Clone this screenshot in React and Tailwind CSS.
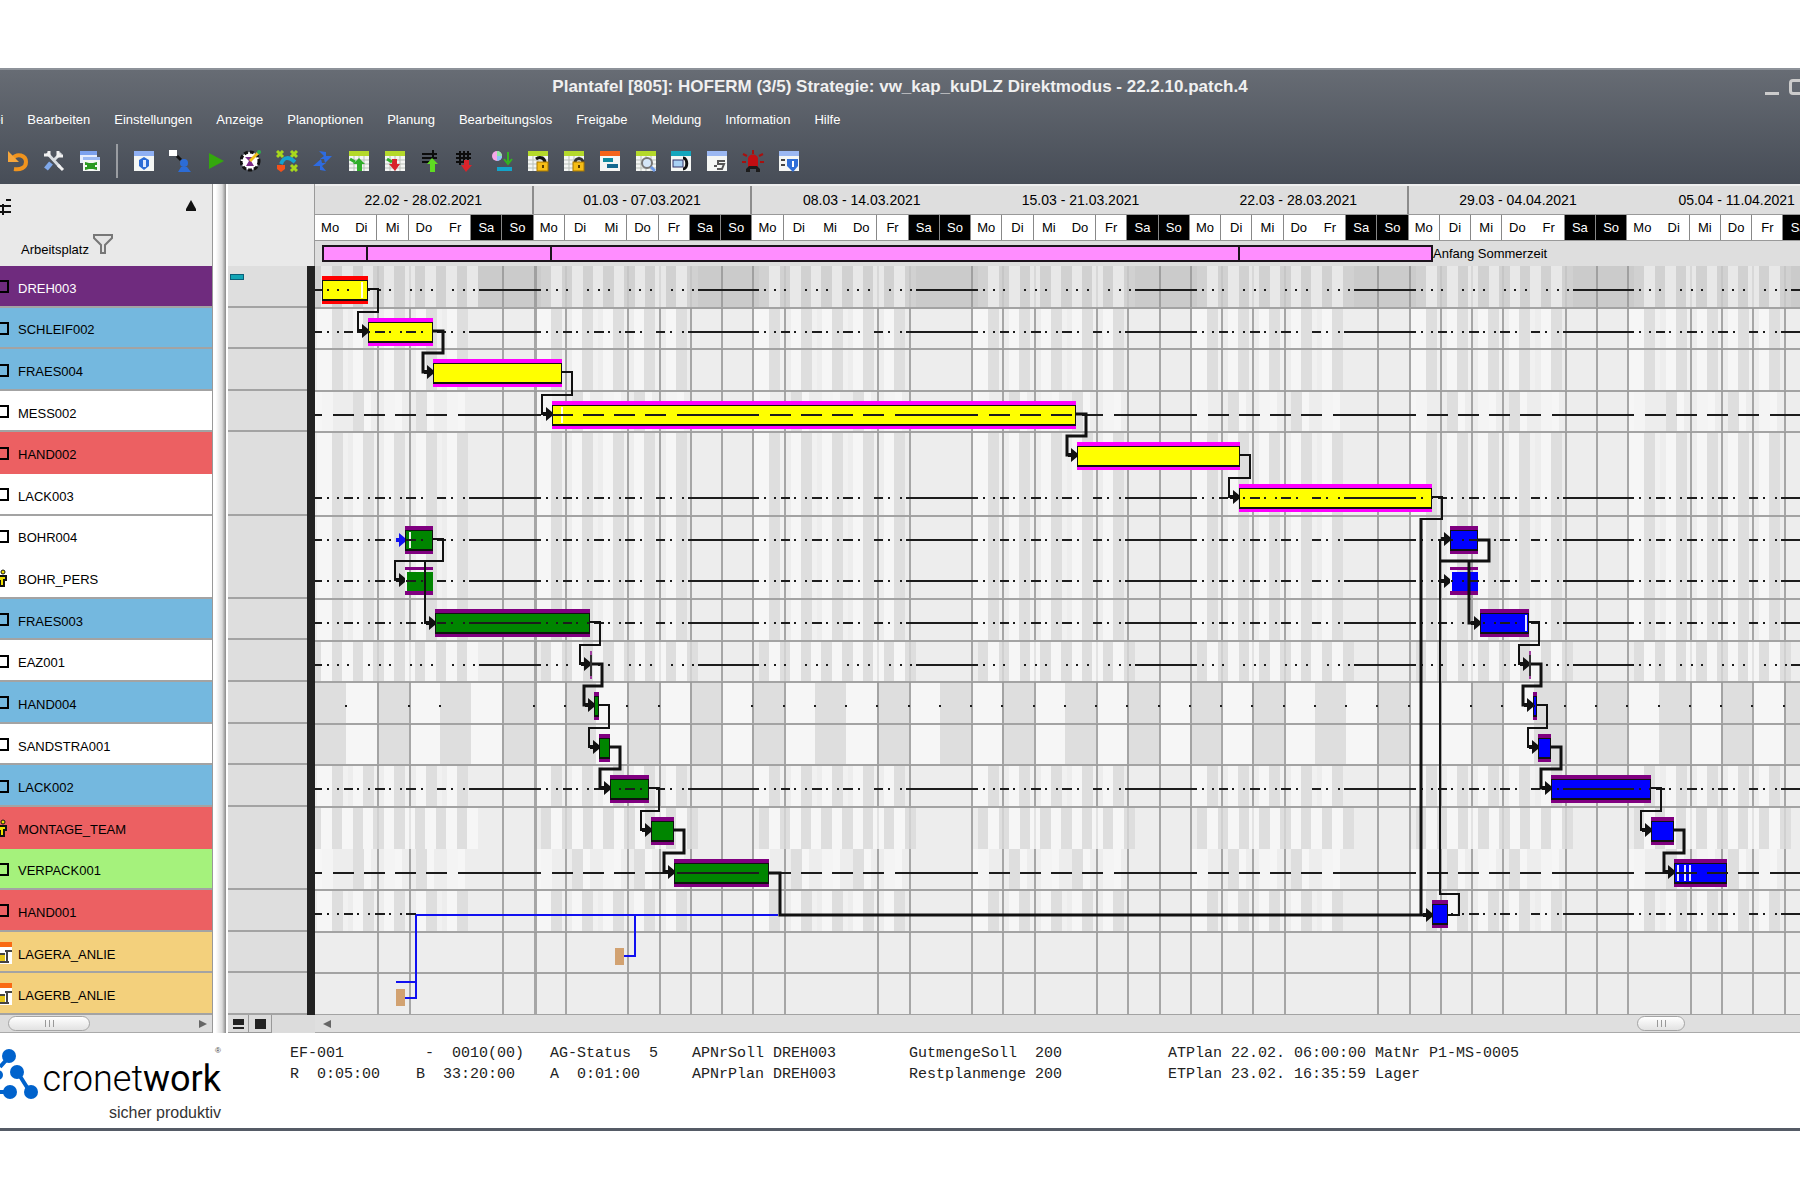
import React from 'react';

const DAY_WIDTH = 1531 / 49;
const ROW_HEIGHT = 749 / 18;

const MENU = [
  'Datei', 'Bearbeiten', 'Einstellungen', 'Anzeige', 'Planoptionen', 'Planung',
  'Bearbeitungslos', 'Freigabe', 'Meldung', 'Information', 'Hilfe',
];

// merged: days that have no divider to the day that follows
const WEEKS = [
  { label: '22.02 - 28.02.2021', line: true, merged: [0, 3] },
  { label: '01.03 - 07.03.2021', line: true, merged: [1] },
  { label: '08.03 - 14.03.2021', line: false, merged: [1, 2] },
  { label: '15.03 - 21.03.2021', line: false, merged: [2] },
  { label: '22.03 - 28.03.2021', line: true, merged: [3] },
  { label: '29.03 - 04.04.2021', line: false, merged: [3] },
  { label: '05.04 - 11.04.2021', line: false, merged: [0] },
];

const DAYS = ['Mo', 'Di', 'Mi', 'Do', 'Fr', 'Sa', 'So'];

// shift: which shift model is painted behind the row, dash: which capacity line
const ROWS = [
  { name: 'DREH003', color: 'bg-[#6f2b7e] text-white', line: true, shift: 'dark', dash: 'dots' },
  { name: 'SCHLEIF002', color: 'bg-[#74b8df]', line: true, shift: 'three', dash: 'mixed' },
  { name: 'FRAES004', color: 'bg-[#74b8df]', line: true, shift: 'three' },
  { name: 'MESS002', color: 'bg-white', line: true, shift: 'day', dash: 'long' },
  { name: 'HAND002', color: 'bg-[#ec6062]', line: false, shift: 'three' },
  { name: 'LACK003', color: 'bg-white', line: true, shift: 'three', dash: 'mixed' },
  { name: 'BOHR004', color: 'bg-white', line: false, shift: 'three', dash: 'mixed' },
  { name: 'BOHR_PERS', color: 'bg-white', line: true, shift: 'three', dash: 'mixed', icon: 'person' },
  { name: 'FRAES003', color: 'bg-[#74b8df]', line: true, shift: 'three', dash: 'mixed' },
  { name: 'EAZ001', color: 'bg-white', line: true, shift: 'two', dash: 'dots' },
  { name: 'HAND004', color: 'bg-[#74b8df]', line: true, shift: 'block', dash: 'daily' },
  { name: 'SANDSTRA001', color: 'bg-white', line: true, shift: 'block' },
  { name: 'LACK002', color: 'bg-[#74b8df]', line: true, shift: 'three', dash: 'mixed' },
  { name: 'MONTAGE_TEAM', color: 'bg-[#ec6062]', line: false, shift: 'two', icon: 'person' },
  { name: 'VERPACK001', color: 'bg-[#a5f27c]', line: true, shift: 'day', dash: 'long' },
  { name: 'HAND001', color: 'bg-[#ec6062]', line: true, shift: 'three', dash: 'mixed', gap: [100, 1133] },
  { name: 'LAGERA_ANLIE', color: 'bg-[#f3d07c]', line: true, icon: 'store' },
  { name: 'LAGERB_ANLIE', color: 'bg-[#f3d07c]', line: true, icon: 'store' },
];

// offsets in pixels from the Monday of each week: [from, to] is a stroke, a single number a dot
const DASHES = {
  mixed: [[0, 7], 13, 23, [29, 38], 43, 54, [60, 70], 75, 86, [91, 101], 107, [122, 131], 137, 149, [154, 219]],
  dots: [[0, 7], 13, 23, 33, 54, 65, 75, 96, 106, 117, 138, 149, 159, [164, 219]],
  long: [[0, 7], [18, 39], [49, 70], [80, 101], [111, 132], [143, 219]],
};

const BARS = [
  { row: 0, x1: 7, x2: 53, fill: '#ffff00', band: '#ff0000', ticks: [46] },
  { row: 1, x1: 53, x2: 118, fill: '#ffff00', band: '#ff00ff' },
  { row: 2, x1: 118, x2: 247, fill: '#ffff00', band: '#ff00ff' },
  { row: 3, x1: 237, x2: 761, fill: '#ffff00', band: '#ff00ff', ticks: [246] },
  { row: 4, x1: 762, x2: 925, fill: '#ffff00', band: '#ff00ff' },
  { row: 5, x1: 924, x2: 1117, fill: '#ffff00', band: '#ff00ff' },
  { row: 6, x1: 90, x2: 118, fill: '#008500', band: '#800080', ticks: [94] },
  { row: 7, x1: 90, x2: 118, fill: '#008500', band: '#800080', bare: true },
  { row: 8, x1: 120, x2: 275, fill: '#008500', band: '#800080' },
  { row: 9, x1: 275, x2: 277, fill: '#333', band: '#a040a0' },
  { row: 10, x1: 279, x2: 284, fill: '#008500', band: '#800080' },
  { row: 11, x1: 284, x2: 295, fill: '#008500', band: '#800080' },
  { row: 12, x1: 295, x2: 334, fill: '#008500', band: '#800080' },
  { row: 13, x1: 336, x2: 359, fill: '#008500', band: '#800080' },
  { row: 14, x1: 359, x2: 454, fill: '#008500', band: '#800080' },
  { row: 6, x1: 1135, x2: 1163, fill: '#0000ff', band: '#800080' },
  { row: 7, x1: 1135, x2: 1163, fill: '#0000ff', band: '#800080', bare: true },
  { row: 8, x1: 1165, x2: 1214, fill: '#0000ff', band: '#800080', ticks: [1210] },
  { row: 9, x1: 1214, x2: 1216, fill: '#333', band: '#a040a0' },
  { row: 10, x1: 1218, x2: 1222, fill: '#0000ff', band: '#800080' },
  { row: 11, x1: 1223, x2: 1236, fill: '#0000ff', band: '#800080' },
  { row: 12, x1: 1236, x2: 1336, fill: '#0000ff', band: '#800080' },
  { row: 13, x1: 1336, x2: 1359, fill: '#0000ff', band: '#800080' },
  { row: 14, x1: 1359, x2: 1412, fill: '#0000ff', band: '#800080', ticks: [1362, 1369, 1374] },
  { row: 15, x1: 1117, x2: 1133, fill: '#0000ff', band: '#800080' },
];

// [row, end of the predecessor, start of the successor in the next row]
const LINKS = [
  [0, 53, 53], [1, 118, 118], [2, 247, 237], [3, 761, 762], [4, 925, 924],
  [6, 118, 90], [8, 275, 275], [9, 277, 279], [10, 284, 284], [11, 295, 295],
  [12, 334, 336], [13, 359, 359], [8, 1214, 1214], [9, 1216, 1218],
  [10, 1222, 1223], [11, 1236, 1236], [12, 1336, 1336], [13, 1359, 1359],
];

const rowTop = (row) => Math.round(row * ROW_HEIGHT);
const rowMid = (row) => rowTop(row) + 24;
const dayX = (day) => Math.round(day * DAY_WIDTH);

const hasDayLine = (day) => {
  if ([5, 20, 33].includes(day)) return false;
  return !WEEKS[Math.floor((day - 1) / 7)].merged.includes((day - 1) % 7);
};

function Shifts({ row, type }) {
  const y = rowTop(row);
  const height = rowTop(row + 1) - y;
  const rects = [];
  const add = (x, width, fill) => rects.push({ x, width, fill });

  for (let day = 0; day < 49; day++) {
    const x = dayX(day);
    const weekday = day % 7;
    if (type === 'block') {
      // the rhythm flips with the change to summer time
      const odd = day < 36 ? day % 2 : (day + 1) % 2;
      add(x, 32, odd ? '#f6f6f6' : '#dedede');
    } else if (weekday < 5 && type === 'three') {
      add(x + (weekday === 0 ? 2 : 7), weekday === 0 ? 15 : 10, '#f6f6f6');
      add(x + 17, 11, '#dedede');
      if (weekday < 4) add(x + 28, 5, '#f1f1f1');
    } else if (weekday < 5 && type === 'day') {
      add(x + (weekday === 0 ? 0 : 18), 7, '#f6f6f6');
      add(x + 7, 11, weekday === 1 || weekday === 3 ? '#dedede' : '#f4f4f4');
    }
  }
  if (type === 'two' || type === 'dark') {
    const light = type === 'dark' ? '#e8e8e8' : '#f6f6f6';
    const dark = type === 'dark' ? '#d1d1d1' : '#dedede';
    for (let week = 0; week < 7; week++) {
      const x = dayX(week * 7) + (week ? 7 : -4);
      for (let i = 0; i < (week ? 15 : 16); i++) {
        add(x + Math.round(i * 10.4), 11, i % 2 ? light : dark);
      }
    }
  }
  return (
    <g shapeRendering="crispEdges">
      <rect x="0" y={y} width="100%" height={height} fill={type === 'dark' ? '#cbcbcb' : '#ededed'} />
      {rects.map((r, i) => (
        <rect key={i} x={r.x} y={y} width={r.width} height={height} fill={r.fill} />
      ))}
    </g>
  );
}

function GridLines({ row }) {
  const faint = ['dark', 'two'].includes(ROWS[row].shift);
  const lines = [];
  for (let day = 1; day < 49; day++) {
    if (!hasDayLine(day)) continue;
    const weekend = day % 7 === 6 || day % 7 === 0;
    lines.push(
      <rect
        key={day}
        x={dayX(day)}
        y={rowTop(row)}
        width={day === 7 ? 3 : 2}
        height={rowTop(row + 1) - rowTop(row)}
        fill="#999"
        opacity={faint && !weekend ? 0.2 : 0.85}
      />
    );
  }
  return (
    <g shapeRendering="crispEdges">
      {lines}
      {ROWS[row].line && <rect x="0" y={rowTop(row + 1) - 1} width="100%" height="2" fill="#a3a3a3" />}
    </g>
  );
}

function CapacityLine({ row, type, gap }) {
  const y = rowMid(row) - 1;
  let marks = [];
  if (type === 'daily') {
    for (let day = 1; day < 48; day++) {
      if ([2, 5, 6, 9, 12, 13].includes(day)) continue;
      marks.push([dayX(day) - 1, 2]);
    }
  } else {
    for (let week = 0; week < 7; week++) {
      const start = dayX(week * 7);
      DASHES[type].forEach((d) => {
        marks.push(Array.isArray(d) ? [start + d[0], d[1] - d[0]] : [start + d - 1, 2]);
      });
    }
  }
  if (gap) marks = marks.filter(([x]) => x < gap[0] || x > gap[1]);
  return (
    <g fill="#1c1c1c" shapeRendering="crispEdges">
      {marks.map(([x, width]) => (
        <rect key={x} x={x} y={y} width={width} height="2" />
      ))}
    </g>
  );
}

function Bar({ row, x1, x2, fill, band, ticks = [], bare }) {
  const y = rowTop(row);
  const width = x2 - x1;
  return (
    <g shapeRendering="crispEdges">
      {bare ? (
        <>
          <rect x={x1} y={y + 10} width={width} height="3" fill={band} />
          <rect x={x1} y={y + 34} width={width} height="4" fill={band} />
          <rect x={x1 + 2} y={y + 15} width={width - 2} height="19" fill={fill} />
        </>
      ) : (
        <>
          <rect x={x1} y={y + 10} width={width} height="28" fill={band} />
          <rect x={x1} y={y + 14} width={width} height="21" fill={width > 3 ? '#111' : fill} />
          {width > 3 && <rect x={x1 + 1} y={y + 15} width={width - 2} height="18" fill={fill} />}
        </>
      )}
      {ticks.map((x) => (
        <rect key={x} x={x} y={y + 16} width="2" height="16" fill="#fff" opacity="0.9" />
      ))}
    </g>
  );
}

function Arrow({ x, y, fill = '#111' }) {
  return <path d={`M${x - 6} ${y - 7}v5h-3v4h3v5l6-5v-4z`} fill={fill} />;
}

function Link({ row, from, to }) {
  const y1 = rowMid(row) - 1;
  const y2 = rowMid(row + 1) - 1;
  const turn = rowTop(row + 1) + 4;
  return (
    <g>
      <path
        d={`M${from} ${y1}H${from + 10}V${turn}H${to - 10}V${y2}H${to - 4}`}
        fill="none"
        stroke="#111"
        strokeWidth={row % 2 ? 3 : 2}
      />
      <Arrow x={to} y={y2} />
    </g>
  );
}

function Chart() {
  return (
    <svg className="block h-[749px] w-full" role="img" aria-label="Plantafel">
      {ROWS.map((r, i) => <Shifts key={r.name} row={i} type={r.shift} />)}
      {ROWS.map((r, i) => <GridLines key={r.name} row={i} />)}

      {/* material links */}
      <g fill="none" stroke="#1010f0" strokeWidth="2">
        <path d="M463 649H101V732H90M81 716H101M320 649V690H309" />
        <path d="M81 274H88" />
      </g>
      <rect x="300" y="682" width="9" height="17" fill="#d2a271" />
      <rect x="81" y="723" width="9" height="17" fill="#d2a271" />

      {BARS.map((b) => <Bar key={`${b.row}-${b.x1}`} {...b} />)}
      {ROWS.map((r, i) => r.dash && <CapacityLine key={r.name} row={i} type={r.dash} gap={r.gap} />)}

      {LINKS.map(([row, from, to]) => <Link key={`${row}-${from}`} row={row} from={from} to={to} />)}
      <g fill="none" stroke="#111" strokeWidth="2">
        <path d="M110 295V357H118" />
        <path d="M1133 649H1144V628H1125V274H1130" />
        <path strokeWidth="3" d="M1163 274H1174V295H1125" />
        <path strokeWidth="3" d="M1154 295V357H1162" />
        <path d="M1117 231H1127V253H1106" />
        <path strokeWidth="3" d="M1106 252V649" />
        <path strokeWidth="3" d="M454 607H465V649H1112" />
      </g>
      <Arrow x={90} y={274} fill="#1010f0" />
      <Arrow x={120} y={357} />
      <Arrow x={1135} y={273} />
      <Arrow x={1135} y={315} />
      <Arrow x={1165} y={357} />
      <Arrow x={1117} y={649} />
    </svg>
  );
}

function Sheet({ bar, children }) {
  return (
    <>
      <rect x="1" y="1" width="20" height="20" fill="#f4f6f4" />
      <rect x="1" y="1" width="20" height="5" fill={bar} />
      {children}
    </>
  );
}

const GRID = <path d="M1 10h20M1 14h20M1 18h20M6 6v15M11 6v15M16 6v15" stroke="#b9c0b9" fill="none" />;
const LOCK = (
  <>
    <rect x="10" y="12" width="11" height="9" fill="#f5bd16" stroke="#a87800" />
    <rect x="15" y="15" width="2" height="3" fill="#5a3d00" />
  </>
);

const TOOLS = [
  ['Rückgängig', <>
    <path d="M6 8c4-5 13-3 13 4 0 6-6 8-12 7" fill="none" stroke="#f0941e" strokeWidth="4" />
    <path d="M1 1v11h11l-4-4-3-3z" fill="#f6a63c" />
  </>],
  ['Werkzeuge', <>
    <path d="M4 3l13 14M18 3L10 11" stroke="#d8dce0" strokeWidth="3" fill="none" />
    <path d="M8 13l-5 6" stroke="#7fa8ea" strokeWidth="5" />
    <path d="M15 1v5h5M1 5h5V1M15 15l5 5" stroke="#f1f1f1" strokeWidth="3" fill="none" />
  </>],
  ['Ansicht laden', <>
    <rect x="1" y="1" width="17" height="12" fill="#e8eefc" /><rect x="1" y="1" width="17" height="4" fill="#7da2ee" />
    <rect x="4" y="7" width="17" height="14" fill="#f5f8f5" /><rect x="4" y="7" width="17" height="3" fill="#9dbaf3" />
    <path d="M6 12l4 1h4l4-1v3h-2v2h2v3l-4-1h-4l-4 1v-3h2v-2H6z" fill="#2b9a22" />
  </>],
  ['Info', <Sheet bar="#8fb0f4">
    <path d="M11 7l5 3v6l-5 4-5-4v-6z" fill="#2c6cd6" /><path d="M10 10h3v7h-3z" fill="#dce8ff" />
  </Sheet>],
  ['Arbeitsgang', <>
    <rect x="0" y="0" width="8" height="6" fill="#fff" /><path d="M8 6l4 4" stroke="#111" strokeWidth="3" />
    <circle cx="15" cy="13" r="4" fill="#2c6cd6" /><path d="M9 22l3-5h6l4 5z" fill="#2c6cd6" />
  </>],
  ['Start', <path d="M4 3l15 8-15 8z" fill="#34a80d" />],
  ['Simulation', <>
    <circle cx="10" cy="11" r="9" fill="#fff" stroke="#111" strokeWidth="3" strokeDasharray="4 2" />
    <path d="M5 7h8l-2 4 3 5H6l3-5z" fill="#7a2a85" /><path d="M10 11l8-8" stroke="#f2c11b" strokeWidth="3" />
    <circle cx="19" cy="2" r="2" fill="#2eae4e" />
  </>],
  ['Netz', <>
    <path d="M1 1l6 6M7 1L1 7M15 1l6 6M21 1l-6 6M15 15l6 6M21 15l-6 6" stroke="#a8d81c" strokeWidth="3" />
    <path d="M5 14c3-8 8-7 14-2" stroke="#15a3cf" strokeWidth="4" fill="none" />
    <path d="M1 15h8v4l-4 3-4-3z" fill="#f4511a" />
  </>],
  ['Aktualisieren', <>
    <path d="M7 1l7 1v4h6l-7 7-1-4H8l4-3z" fill="#2e6be0" /><path d="M14 21l-6-1v-4H1l8-7 1 4h4l-4 3z" fill="#2e6be0" />
  </>],
  ['Einplanen', <Sheet bar="#b4d92b">{GRID}<path d="M11 8l6 6h-3v7H9v-7H5z" fill="#2fae2a" /><path d="M2 9l5 3" stroke="#2fae2a" strokeWidth="3" /></Sheet>],
  ['Ausplanen', <Sheet bar="#b4d92b">{GRID}<path d="M8 9h5v5h3l-5 7-6-7h3z" fill="#d8232a" /><path d="M3 9l5 3" stroke="#2fae2a" strokeWidth="3" /></Sheet>],
  ['Raster hoch', <>
    <path d="M2 4h15M2 8h15M2 12h8M13 0v8" stroke="#0c0c0c" strokeWidth="2" /><path d="M12 8l6 6h-3v8h-5v-8H7z" fill="#5fdc22" />
  </>],
  ['Raster runter', <>
    <path d="M1 4h15M1 8h15M1 12h8M5 1v14M9 1v10M13 1v9" stroke="#0c0c0c" strokeWidth="2" /><path d="M9 10h5v5h3l-6 7-5-7h3z" fill="#d8232a" />
  </>],
  ['Farben', <>
    <circle cx="6" cy="6" r="5" fill="#f5a8e8" /><path d="M6 1a5 5 0 0 1 5 5H6z" fill="#8ce8a0" /><path d="M6 6h5a5 5 0 0 1-5 5z" fill="#8cc4f5" />
    <path d="M17 2v10M13 9l4 5 4-5" stroke="#33b41f" strokeWidth="2" fill="none" /><rect x="6" y="17" width="15" height="4" fill="#13a4c9" />
  </>],
  ['Entsperren', <Sheet bar="#b4d92b">{GRID}<path d="M9 9c4-3 9-1 9 4" stroke="#111" strokeWidth="3" fill="none" />{LOCK}</Sheet>],
  ['Sperren', <Sheet bar="#b4d92b">{GRID}<path d="M12 13c0-6 8-6 8 0" stroke="#333" strokeWidth="3" fill="none" />{LOCK}</Sheet>],
  ['Balken', <Sheet bar="#f5641a"><rect x="4" y="8" width="10" height="4" fill="#118a9e" /><rect x="8" y="14" width="11" height="4" fill="#14698f" /></Sheet>],
  ['Suchen', <Sheet bar="#b4d92b">{GRID}<circle cx="12" cy="13" r="5" fill="#d4e6f7" stroke="#777" strokeWidth="2" /><path d="M16 17l4 4" stroke="#6d9ae8" strokeWidth="3" /></Sheet>],
  ['Fenster', <Sheet bar="#14a6bd"><rect x="3" y="10" width="10" height="7" fill="#a8d1f5" stroke="#336" /><path d="M13 8c5 0 5 11 0 11" stroke="#111" strokeWidth="3" fill="none" /></Sheet>],
  ['Protokoll', <Sheet bar="#9bb8f2"><path d="M19 11h-7v3h6l-2 5h-5M8 16h3" stroke="#555" fill="none" strokeWidth="2" /></Sheet>],
  ['Alarm', <>
    <path d="M6 17V9c0-6 10-6 10 0v8z" fill="#c20e12" /><path d="M4 22v-3l3-3h8l3 3v3h-4v-3h-6v3z" fill="#1c1c1c" />
    <path d="M1 4l4 2M21 4l-4 2M0 12h4M18 12h4M11 0v4" stroke="#a8100f" strokeWidth="2" />
  </>],
  ['Hilfe', <Sheet bar="#9bb8f2"><path d="M3 10h4M3 15h4" stroke="#444" strokeWidth="2" /><path d="M9 9h11v7l-5 6-6-6z" fill="#2f6fd8" /><path d="M14 11h2v6h-2z" fill="#fff" /></Sheet>],
];

function ToolButton({ tool: [label, drawing] }) {
  return (
    <button type="button" aria-label={label} className="size-[22px] shrink-0">
      <svg viewBox="0 0 22 22" className="size-[22px]">{drawing}</svg>
    </button>
  );
}

function TitleBar() {
  return (
    <header className="h-[116px] overflow-hidden border-t-2 border-[#8d9299] bg-linear-to-b from-[#676c74] to-[#474d57] text-white">
      <div className="grid h-[34px] grid-cols-[1fr_auto_1fr] items-center">
        <span />
        <h1 className="text-[17px] leading-[20px] font-bold text-[#f0f0f0]">
          Plantafel [805]: HOFERM (3/5) Strategie: vw_kap_kuDLZ Direktmodus - 22.2.10.patch.4
        </h1>
        <div className="-mr-[4px] flex items-end justify-end gap-[10px]">
          <button type="button" aria-label="Minimieren" className="h-[16px] w-[14px] border-b-[3px] border-[#ccc]" />
          <button type="button" aria-label="Maximieren" className="h-[16px] w-[15px] rounded-sm border-[3px] border-[#ccc]" />
        </div>
      </div>
      <nav className="-ml-[27px] flex h-[32px] items-center gap-[24px] text-[13px] leading-[16px]">
        {MENU.map((item) => (
          <button key={item} type="button">{item}</button>
        ))}
      </nav>
      <div className="flex h-[50px] items-center gap-[14px] pl-[7px]">
        {TOOLS.slice(0, 3).map((tool) => <ToolButton key={tool[0]} tool={tool} />)}
        <span className="flex w-[4px] justify-center"><span className="h-[34px] w-[2px] bg-[#9a9da2]" /></span>
        <div className="flex w-[667px] justify-between">
          {TOOLS.slice(3).map((tool) => <ToolButton key={tool[0]} tool={tool} />)}
        </div>
      </div>
    </header>
  );
}

function RowIcon({ type }) {
  if (type === 'person') {
    return (
      <svg viewBox="0 0 9 20" className="h-[20px] w-[9px]">
        <circle cx="3" cy="4" r="2" fill="#f0e000" stroke="#111" />
        <path d="M-3 8h9v4H4v6H0v-5h-3z" fill="#f0e000" stroke="#111" strokeWidth="2" />
      </svg>
    );
  }
  if (type === 'store') {
    return (
      <svg viewBox="0 0 12 22" className="h-[22px] w-[12px]">
        <rect width="12" height="22" fill="#fff" />
        <rect width="12" height="5" fill="#f96a14" />
        <path d="M0 13h5v6H0z" fill="#e5c61b" />
        <path d="M7 8v13M0 12h5M0 20h9M5 9h7" stroke="#444" fill="none" strokeWidth="2" />
      </svg>
    );
  }
  return <span className="block h-[13px] w-[9px] border-2 border-l-0 border-black" />;
}

function WorkplaceList() {
  return (
    <section className="w-[213px] shrink-0 border-r border-[#999]">
      <div className="flex h-[82px] flex-col justify-between bg-[#e9e9e9] pt-[15px] pb-[8px]">
        <div className="flex justify-between pr-[15px]">
          <svg viewBox="0 0 12 16" className="h-[16px] w-[12px]">
            <path d="M0 7h11M0 13h11M3 5v11M6 1h5" stroke="#111" strokeWidth="2" />
          </svg>
          <svg viewBox="0 0 12 14" className="h-[14px] w-[12px]"><path d="M6 1l5 9v2H1v-2z" fill="#111" /></svg>
        </div>
        <div className="flex items-start pl-[21px]">
          <span className="pt-[9px] text-[13px] leading-[16px]">Arbeitsplatz</span>
          <svg viewBox="0 0 20 22" className="ml-[4px] h-[22px] w-[20px]">
            <path d="M1 2h18v3l-7 7v8H8v-8L1 5z" fill="#e4e4e4" stroke="#777" strokeWidth="2" />
          </svg>
        </div>
      </div>
      <ul className="grid h-[749px] auto-rows-fr">
        {ROWS.map((r) => (
          <li key={r.name} className={`flex items-center border-b-2 pt-[2px] ${r.line ? 'border-[#a3a3a3]' : 'border-transparent'} ${r.color}`}>
            <span className="w-[18px]"><RowIcon type={r.icon} /></span>
            <span className="pt-[4px] text-[13px] leading-[16px]">{r.name}</span>
          </li>
        ))}
      </ul>
      <div className="flex h-[18px] items-center justify-between border-b border-[#aaa] bg-[#dcdcdc] pr-[5px] pl-[8px]">
        <ScrollThumb wide />
        <svg viewBox="0 0 8 8" className="size-[8px]"><path d="M0 0l8 4-8 4z" fill="#666" /></svg>
      </div>
    </section>
  );
}

function ScrollThumb({ wide }) {
  return (
    <span className={`flex h-[15px] items-center justify-center gap-[3px] rounded-full border border-[#a5a5a5] bg-linear-to-b from-white to-[#e2e2e2] ${wide ? 'w-[82px]' : 'w-[48px]'}`}>
      <i className="h-[7px] w-px bg-[#999]" />
      <i className="h-[7px] w-px bg-[#999]" />
      <i className="h-[7px] w-px bg-[#999]" />
    </span>
  );
}

function LoadColumn() {
  return (
    <section className="w-[87px] shrink-0">
      <div className="h-[82px] border-r border-[#999] bg-[#e9e9e9]" />
      <ul className="grid h-[749px] auto-rows-fr border-r-8 border-[#222] bg-[#dedede]">
        {ROWS.map((r, i) => (
          <li key={r.name} className={`border-b-2 ${r.line ? 'border-[#a3a3a3]' : 'border-transparent'}`}>
            {i === 0 && <span className="mt-[8px] ml-[2px] block h-[6px] w-[14px] border border-[#0b5f78] bg-[#12a5b5]" />}
          </li>
        ))}
      </ul>
      <div className="flex h-[18px] bg-[#dcdcdc]">
        <button type="button" aria-label="Zeilen klein" className="flex w-[21px] flex-col items-center justify-center gap-[2px] border-r border-b border-[#999]">
          <span className="h-[6px] w-[11px] bg-[#222]" />
          <span className="h-[2px] w-[11px] bg-[#222]" />
        </button>
        <button type="button" aria-label="Zeilen groß" className="flex w-[23px] items-center justify-center border-r border-b border-[#999]">
          <span className="h-[10px] w-[11px] bg-[#222]" />
        </button>
      </div>
    </section>
  );
}

function Timeline() {
  return (
    <div className="h-[82px] overflow-hidden border-t-2 border-[#eee] bg-[#dedede]">
      <div className="grid w-[1531px] grid-cols-7">
        {WEEKS.map((week) => (
          <div key={week.label}>
            <div className={`flex h-[28px] items-center justify-center text-[14px] leading-[16px] ${week.line ? 'border-r-2 border-[#8c8c8c]' : ''}`}>
              {week.label}
            </div>
            <div className="grid h-[27px] grid-cols-7 border-y border-[#999]">
              {DAYS.map((day, i) => (
                <span
                  key={day}
                  className={`flex items-center justify-center border-r text-[13px] leading-[16px] ${
                    i > 4 ? 'border-[#888] bg-black text-white' : week.merged.includes(i) ? 'border-white bg-white' : 'border-[#888] bg-white'
                  }`}
                >
                  {day}
                </span>
              ))}
            </div>
          </div>
        ))}
      </div>
      <div className="mt-[4px] ml-[7px] flex h-[17px] items-center">
        <div className="flex h-[17px] shrink-0 border-2 border-r-0 border-[#1d141d] bg-[#ff8dff]">
          <span className="w-[44px] border-r-2 border-[#1d141d]" />
          <span className="w-[184px] border-r-2 border-[#1d141d]" />
          <span className="w-[688px] border-r-2 border-[#1d141d]" />
          <span className="w-[193px] border-r-2 border-[#1d141d]" />
        </div>
        <span className="text-[13px] leading-[16px] whitespace-nowrap">Anfang Sommerzeit</span>
      </div>
    </div>
  );
}

function StatusBar() {
  return (
    <footer className="flex h-[98px] overflow-hidden border-b-[3px] border-[#555b66] bg-white">
      <div className="flex w-[290px] shrink-0 items-start pt-[14px]">
        <svg viewBox="0 0 40 56" className="h-[56px] w-[40px]">
          <path d="M9 10l-9 10M18 26l12 19M-4 45h14M-2 20v8" stroke="#0062cc" strokeWidth="4" />
          <circle cx="9" cy="9" r="7" fill="#0062cc" />
          <circle cx="17" cy="25" r="7" fill="#0062cc" />
          <circle cx="-2" cy="28" r="5" fill="#0062cc" />
          <circle cx="10" cy="45" r="7" fill="#0062cc" />
          <circle cx="31" cy="45" r="7" fill="#0062cc" />
        </svg>
        <div className="flex w-[181px] flex-col items-end">
          <span className="text-[8px] leading-[8px] text-[#444]">®</span>
          <span className="font-[Roboto] text-[36px] leading-[48px] font-light text-black">
            cronet<span className="font-normal">work</span>
          </span>
          <span className="text-[16px] leading-[20px] text-[#333]">sicher produktiv</span>
        </div>
      </div>
      <div className="grid h-[52px] grid-cols-[126px_134px_142px_217px_259px_auto] items-center pt-[10px] font-['Liberation_Mono',monospace] text-[15px] leading-[21px] whitespace-pre text-[#222]">
        <span>EF-001</span>
        <span>{' -  0010(00)'}</span>
        <span>{'AG-Status  5'}</span>
        <span>APNrSoll DREH003</span>
        <span>{'GutmengeSoll  200'}</span>
        <span>ATPlan 22.02. 06:00:00 MatNr P1-MS-0005</span>
        <span>{'R  0:05:00'}</span>
        <span>{'B  33:20:00'}</span>
        <span>{'A  0:01:00'}</span>
        <span>APNrPlan DREH003</span>
        <span>Restplanmenge 200</span>
        <span>ETPlan 23.02. 16:35:59 Lager</span>
      </div>
    </footer>
  );
}

function App() {
  return (
    <div className="min-h-screen overflow-hidden bg-white py-[68px] font-['Liberation_Sans',Arial,sans-serif] text-black">
      <TitleBar />
      <main className="flex">
        <WorkplaceList />
        <div className="w-[15px] shrink-0 border-r-2 border-white bg-linear-to-r from-white from-20% via-[#dcdcdc] via-70% to-[#8a8a8a]" />
        <LoadColumn />
        <section className="min-w-0 flex-1">
          <Timeline />
          <Chart />
          <div className="flex h-[18px] items-center justify-between border-b border-[#aaa] bg-[#dfdfdf] pr-[115px] pl-[8px]">
            <svg viewBox="0 0 8 8" className="size-[8px]"><path d="M8 0L0 4l8 4z" fill="#666" /></svg>
            <ScrollThumb />
          </div>
        </section>
      </main>
      <StatusBar />
    </div>
  );
}

export default App;
